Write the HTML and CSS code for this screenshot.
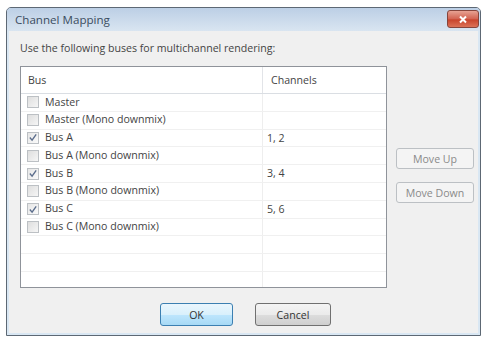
FILE: index.html
```html
<!DOCTYPE html>
<html>
  <head>
    <title>Channel Mapping</title>
    <link rel="stylesheet" href="styles.css">
  </head>
  <body>
    <div class="window">
      <div class="titlebar">
        <span class="title">Channel Mapping</span>
        <span class="close">
          <svg width="10" height="9" viewBox="0 0 10 9"><path d="M2 1.5 L8 7.5 M8 1.5 L2 7.5" stroke="#fff" stroke-width="2"/></svg>
        </span>
      </div>
      <div class="content">
        <p class="intro">Use the following buses for multichannel rendering:</p>
        <div class="main">
          <div class="list">
            <div class="head">
              <div class="c1">Bus</div>
              <div class="c2">Channels</div>
            </div>
            <div class="row"><div class="c1"><span class="box"></span>Master</div><div class="c2"></div></div>
            <div class="row"><div class="c1"><span class="box"></span>Master (Mono downmix)</div><div class="c2"></div></div>
            <div class="row"><div class="c1"><span class="box checked"><svg width="11" height="11" viewBox="0 0 11 11"><path d="M2 5.5 L4.5 8.5 L9 2" fill="none" stroke="#5b6d8c" stroke-width="1.5"/></svg></span>Bus A</div><div class="c2">1, 2</div></div>
            <div class="row"><div class="c1"><span class="box"></span>Bus A (Mono downmix)</div><div class="c2"></div></div>
            <div class="row"><div class="c1"><span class="box checked"><svg width="11" height="11" viewBox="0 0 11 11"><path d="M2 5.5 L4.5 8.5 L9 2" fill="none" stroke="#5b6d8c" stroke-width="1.5"/></svg></span>Bus B</div><div class="c2">3, 4</div></div>
            <div class="row"><div class="c1"><span class="box"></span>Bus B (Mono downmix)</div><div class="c2"></div></div>
            <div class="row"><div class="c1"><span class="box checked"><svg width="11" height="11" viewBox="0 0 11 11"><path d="M2 5.5 L4.5 8.5 L9 2" fill="none" stroke="#5b6d8c" stroke-width="1.5"/></svg></span>Bus C</div><div class="c2">5, 6</div></div>
            <div class="row"><div class="c1"><span class="box"></span>Bus C (Mono downmix)</div><div class="c2"></div></div>
            <div class="row empty"><div class="c1"></div><div class="c2"></div></div>
            <div class="row empty"><div class="c1"></div><div class="c2"></div></div>
            <div class="row empty"><div class="c1"></div><div class="c2"></div></div>
          </div>
          <div class="side">
            <button class="btn disabled">Move Up</button>
            <button class="btn disabled">Move Down</button>
          </div>
        </div>
        <div class="footer">
          <button class="btn ok">OK</button>
          <button class="btn cancel">Cancel</button>
        </div>
      </div>
    </div>
  </body>
</html>
```

FILE: styles.css
```css
body {
  margin: 0;
  background: #ffffff;
  font-family: "Open Sans", "Noto Sans", sans-serif;
  font-size: 10.6px;
  color: #444;
}

.window {
  box-sizing: border-box;
  width: 475px;
  height: 329px;
  margin: 7px 0 0 6px;
  border: 1px solid #5d6874;
  border-radius: 5px 5px 0 0;
  padding: 0 2px 2px 2px;
  background: #d9e7f3;
  display: flex;
  flex-direction: column;
}

.titlebar {
  height: 23px;
  display: flex;
  align-items: flex-start;
  justify-content: space-between;
  background: linear-gradient(#bccfe5, #d9e5f1);
  margin: 0 -2px;
  padding: 0 1px 0 8px;
  border-radius: 4px 4px 0 0;
}

.title {
  font-size: 11.6px;
  line-height: 24px;
  color: #3b4d60;
}

.close {
  width: 32px;
  height: 18px;
  margin-top: 2px;
  border: 1px solid #86453c;
  border-radius: 3px;
  box-sizing: border-box;
  background: linear-gradient(#e7a293, #d26250 50%, #c8442c 55%, #dc7257);
  display: flex;
  align-items: center;
  justify-content: center;
}

.content {
  flex: 1;
  background: #f0f0f0;
  padding: 10px 4px 0 11px;
}

.intro {
  margin: 0 0 10px 0;
  line-height: 15px;
}

.main {
  display: flex;
  gap: 9px;
}

.list {
  box-sizing: border-box;
  width: 367px;
  height: 222px;
  border: 1px solid #8f939a;
  background: #fff;
  overflow: hidden;
}

.head {
  display: flex;
  height: 26px;
  border-bottom: 1px solid #dadee3;
  line-height: 26px;
}

.head .c1 {
  width: 242px;
  padding-left: 7px;
  box-sizing: border-box;
  border-right: 1px solid #e2e4e8;
}

.head .c2 {
  padding-left: 8px;
}

.row {
  display: flex;
  height: 17.8px;
  line-height: 17.8px;
  border-bottom: 1px solid #f0f0f0;
  box-sizing: border-box;
}

.row .c1 {
  width: 242px;
  box-sizing: border-box;
  padding-left: 6px;
  border-right: 1px solid #eeeeee;
  display: flex;
  align-items: center;
}

.row .c2 {
  padding-left: 4px;
}

.box {
  width: 12px;
  height: 12px;
  box-sizing: border-box;
  border: 1px solid #bcc0c4;
  background: linear-gradient(135deg, #dedede, #f6f6f6);
  margin-right: 6px;
  display: flex;
  align-items: center;
  justify-content: center;
}

.box.checked {
  background: linear-gradient(135deg, #e6e6e6, #fafafa);
}

.side {
  display: flex;
  flex-direction: column;
  gap: 13px;
  padding-top: 82px;
}

.btn {
  font-family: "Open Sans", "Noto Sans", sans-serif;
  font-size: 10.6px;
  box-sizing: border-box;
  border: 1px solid #707070;
  border-radius: 3px;
  background: linear-gradient(#f4f4f4, #ebebeb 50%, #dddddd 51%, #cfcfcf);
  color: #333;
  padding: 0;
}

.btn.disabled {
  width: 78px;
  height: 21px;
  border-color: #bcc0c4;
  background: #f4f4f4;
  color: #8a8a8a;
}

.footer {
  display: flex;
  gap: 22px;
  margin-top: 15px;
  padding-left: 140px;
}

.ok {
  width: 73px;
  height: 23px;
  border-color: #3c7fb1;
  background: linear-gradient(#eaf6fd, #d9f0fc 50%, #bee6fd 51%, #a7d9f5);
}

.cancel {
  width: 76px;
  height: 23px;
}
```
